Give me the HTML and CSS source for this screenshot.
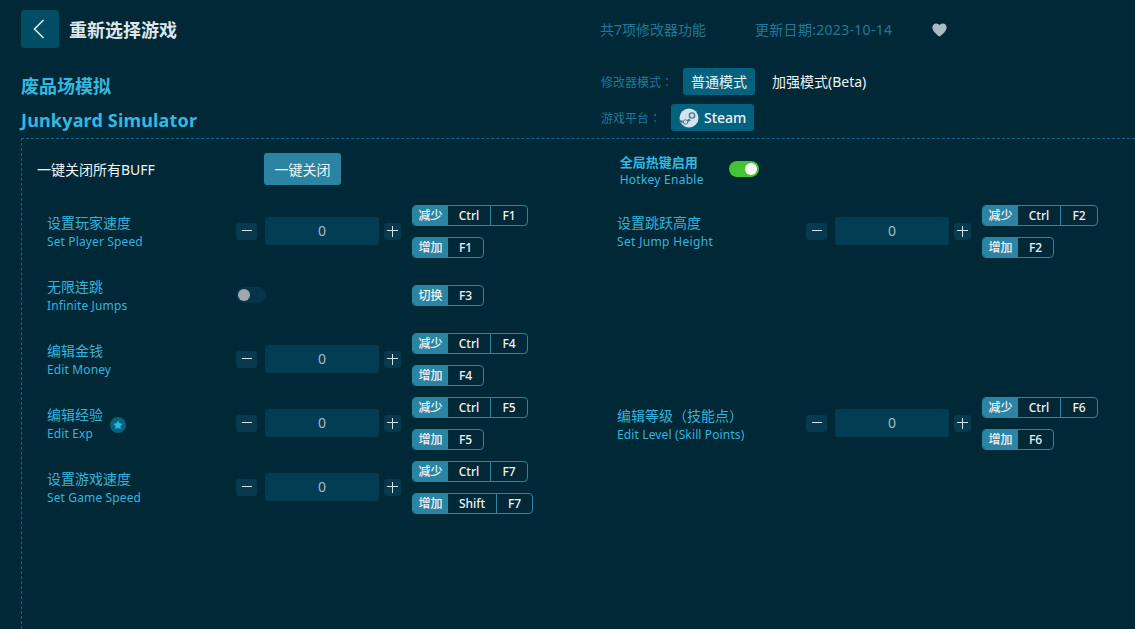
FILE: index.html
```html
<!DOCTYPE html>
<html lang="zh-CN">
<head>
<meta charset="utf-8">
<title>Junkyard Simulator</title>
<link rel="stylesheet" href="styles.css">
</head>
<body>
<header class="topbar">
  <div class="topbar-left">
    <button class="back"><svg width="12" height="20" viewBox="0 0 12 20"><path d="M10.500 1 1.500 10l9 9" fill="none" stroke="#e6eef2" stroke-width="1.500"/></svg></button>
    <h1 class="page-title">重新选择游戏</h1>
  </div>
  <div class="topbar-right">
    <span class="meta meta-count">共7项修改器功能</span>
    <span class="meta meta-date">更新日期:2023-10-14</span>
    <svg class="heart" width="15" height="14" viewBox="0 0 15 14"><path d="M7.500 13.600C3 10 .4 7.600.4 4.400.4 2 2.200.4 4.200.4c1.400 0 2.600.7 3.300 1.900C8.200 1.100 9.400.4 10.800.4c2 0 3.800 1.600 3.800 4 0 3.200-2.600 5.600-7.100 9.200z" fill="#a9bcc6"/></svg>
  </div>
</header>
<section class="info">
  <div class="game">
    <div class="game-name">废品场模拟</div>
    <div class="game-name game-en">Junkyard Simulator</div>
  </div>
  <div class="modes">
    <div class="mode-row">
      <span class="mode-label">修改器模式<span lang="zh-TW">：</span></span>
      <span class="mode-btn active">普通模式</span>
      <span class="mode-btn">加强模式(Beta)</span>
    </div>
    <div class="mode-row">
      <span class="mode-label">游戏平台<span lang="zh-TW">：</span></span>
      <span class="platform">
        <svg width="20" height="20" viewBox="0 0 20 20"><circle cx="10" cy="10" r="9.500" fill="#d5e2ea"/><circle cx="13" cy="7.500" r="3.300" fill="#3f7f9c"/><circle cx="13" cy="7.500" r="1.900" fill="#d5e2ea"/><path d="M.6 11.500l5 2.200 4.600-3.300 1.500 2-5.200 3.400-6-1.800z" fill="#3f7f9c"/><circle cx="6.500" cy="14" r="2.200" fill="#d5e2ea" stroke="#3f7f9c"/></svg>
        Steam
      </span>
    </div>
  </div>
</section>
<main class="panel">
  <div class="panel-top">
    <div class="panel-cell kill">
      <span class="kill-label">一键关闭所有BUFF</span>
      <button class="kill-btn">一键关闭</button>
    </div>
    <div class="panel-cell hotkey">
      <div class="hotkey-text">
        <div class="hotkey-cn">全局热键启用</div>
        <div class="hotkey-en">Hotkey Enable</div>
      </div>
      <span class="switch on"><i></i></span>
    </div>
  </div>
  <div class="grid">
    <div class="row">
      <div class="label"><div class="cn">设置玩家速度</div><div class="en">Set Player Speed</div></div>
      <div class="stepper"><span class="step minus"></span><span class="value">0</span><span class="step plus"></span></div>
      <div class="keys">
        <div class="key"><b>减少</b><span class="k-ctrl">Ctrl</span><span class="k-f">F1</span></div>
        <div class="key"><b>增加</b><span class="k-f">F1</span></div>
      </div>
    </div>
    <div class="row">
      <div class="label"><div class="cn">设置跳跃高度</div><div class="en en-wide">Set Jump Height</div></div>
      <div class="stepper"><span class="step minus"></span><span class="value">0</span><span class="step plus"></span></div>
      <div class="keys">
        <div class="key"><b>减少</b><span class="k-ctrl">Ctrl</span><span class="k-f">F2</span></div>
        <div class="key"><b>增加</b><span class="k-f">F2</span></div>
      </div>
    </div>
    <div class="row">
      <div class="label"><div class="cn">无限连跳</div><div class="en">Infinite Jumps</div></div>
      <div class="toggle-wrap"><span class="switch off"><i></i></span></div>
      <div class="keys">
        <div class="key"><b>切换</b><span class="k-f">F3</span></div>
      </div>
    </div>
    <div class="row empty"></div>
    <div class="row">
      <div class="label"><div class="cn">编辑金钱</div><div class="en">Edit Money</div></div>
      <div class="stepper"><span class="step minus"></span><span class="value">0</span><span class="step plus"></span></div>
      <div class="keys">
        <div class="key"><b>减少</b><span class="k-ctrl">Ctrl</span><span class="k-f">F4</span></div>
        <div class="key"><b>增加</b><span class="k-f">F4</span></div>
      </div>
    </div>
    <div class="row empty"></div>
    <div class="row">
      <div class="label label-star">
        <div><div class="cn">编辑经验</div><div class="en">Edit Exp</div></div>
        <span class="star"><svg width="10" height="10" viewBox="0 0 10 10"><path d="M5 .4l1.450 2.950 3.250.47-2.350 2.300.56 3.230L5 7.830 2.090 9.350l.56-3.230L.3 3.820l3.250-.47z" fill="#2fb8e6"/></svg></span>
      </div>
      <div class="stepper"><span class="step minus"></span><span class="value">0</span><span class="step plus"></span></div>
      <div class="keys">
        <div class="key"><b>减少</b><span class="k-ctrl">Ctrl</span><span class="k-f">F5</span></div>
        <div class="key"><b>增加</b><span class="k-f">F5</span></div>
      </div>
    </div>
    <div class="row">
      <div class="label"><div class="cn">编辑等级<span lang="zh-TW">（</span>技能点<span lang="zh-TW">）</span></div><div class="en">Edit Level (Skill Points)</div></div>
      <div class="stepper"><span class="step minus"></span><span class="value">0</span><span class="step plus"></span></div>
      <div class="keys">
        <div class="key"><b>减少</b><span class="k-ctrl">Ctrl</span><span class="k-f">F6</span></div>
        <div class="key"><b>增加</b><span class="k-f">F6</span></div>
      </div>
    </div>
    <div class="row">
      <div class="label"><div class="cn">设置游戏速度</div><div class="en">Set Game Speed</div></div>
      <div class="stepper"><span class="step minus"></span><span class="value">0</span><span class="step plus"></span></div>
      <div class="keys">
        <div class="key"><b>减少</b><span class="k-ctrl">Ctrl</span><span class="k-f">F7</span></div>
        <div class="key"><b>增加</b><span class="k-shift">Shift</span><span class="k-f">F7</span></div>
      </div>
    </div>
    <div class="row empty"></div>
  </div>
</main>
</body>
</html>
```
FILE: styles.css
```css
* { box-sizing: border-box; }
html, body { margin: 0; height: 100%; }
body {
  height: 629px;
  overflow: hidden;
  background: #002837;
  color: #fff;
  font-family: "Noto Sans", "Noto Sans CJK SC", sans-serif;
  font-size: 13px;
}
[lang="zh-TW"] { font-family: "Noto Sans CJK TC", sans-serif; }
.topbar { display: flex; height: 38px; margin-top: 10px; padding-left: 21px; }
.topbar-left { display: flex; align-items: center; width: 579px; }
.back {
  width: 38px; height: 38px; padding: 0 3px 0 0; border: 0; border-radius: 3px;
  background: #024d66; display: flex; align-items: center; justify-content: center;
}
.page-title { margin: 2px 0 0 10px; font-size: 18px; font-weight: 700; color: #dfe6ea; line-height: 38px; }
.topbar-right { display: flex; align-items: center; height: 40px; }
.meta { font-size: 14px; color: #1f7a9a; line-height: 18px; }
.meta-count { width: 155px; white-space: nowrap; }
.meta-date { width: 177px; letter-spacing: .3px; white-space: nowrap; }
.heart { display: block; }
.info { display: flex; height: 70px; margin-top: 20px; padding-left: 21px; }
.game { width: 580px; padding-top: 2px; }
.game-name { font-size: 18px; font-weight: 700; color: #35b8e0; line-height: 33px; height: 33px; white-space: nowrap; }
.game-en { letter-spacing: .17px; padding-top: 1px; }
.modes { display: flex; flex-direction: column; gap: 9px; }
.mode-row { display: flex; align-items: center; height: 27px; }
.mode-label { font-size: 12px; color: #1f7a9a; width: 82px; white-space: nowrap; }
.mode-row + .mode-row .mode-label { width: 70px; }
.mode-btn { font-size: 14px; line-height: 27px; height: 27px; padding: 0 8px; border-radius: 3px; color: #eef4f6; white-space: nowrap; }
.mode-btn.active { background: #05627f; margin-right: 9px; }
.platform {
  display: flex; align-items: center; gap: 5px; height: 27px; width: 83px; padding-left: 8px;
  border-radius: 3px; background: #05627f; font-size: 14px; font-weight: 500; color: #eef4f6;
}
.panel { margin-left: 21px; height: 491px; border-top: 1px dashed #0b6a88; border-left: 1px dashed #0b6a88; }
.panel-top { display: flex; height: 60px; }
.panel-cell { display: flex; width: 570px; }
.kill { padding-left: 15px; align-items: flex-start; }
.kill-label { width: 227px; font-size: 14px; line-height: 20px; margin-top: 21px; color: #f0f5f7; white-space: nowrap; }
.kill-btn {
  width: 77px; height: 32px; margin-top: 14px; padding: 0; border: 0; border-radius: 3px;
  background: #2a84a2; color: #eef4f6; font-family: inherit; font-size: 14px;
}
.hotkey { padding-left: 42px; margin-left: -1px; align-items: flex-start; }
.hotkey-text { width: 109px; margin-top: 14px; white-space: nowrap; }
.hotkey-cn { font-size: 13px; font-weight: 700; line-height: 18px; color: #35b8e0; }
.hotkey-en { font-size: 12px; line-height: 18px; letter-spacing: .25px; color: #35b8e0; }
.switch { display: block; width: 30px; height: 16px; border-radius: 8px; position: relative; }
.switch i { position: absolute; top: 2px; width: 12px; height: 12px; border-radius: 50%; }
.switch.on { background: #42c436; margin-top: 22px; }
.switch.on i { right: 2px; background: #fff; }
.switch.off { background: #06344a; }
.switch.off i { left: 2px; background: #a2a9ad; }
.grid { display: grid; grid-template-columns: 570px 570px; grid-auto-rows: 64px; }
.row { display: flex; align-items: center; padding-left: 25px; }
.label { width: 189px; padding-top: 3px; white-space: nowrap; }
.label-star { display: flex; align-items: center; }
.star {
  display: flex; align-items: center; justify-content: center;
  width: 16px; height: 16px; margin-left: 7px; border-radius: 50%; background: #05627f;
}
.cn { font-size: 14px; line-height: 18px; color: #35b4dc; }
.en { font-size: 12px; line-height: 18px; margin-top: 1px; letter-spacing: .13px; color: #35b4dc; }
.en-wide { letter-spacing: .33px; }
.stepper { display: flex; align-items: center; width: 176px; }
.step {
  width: 21px; height: 17px; border-radius: 3px; background-color: #083a4f; background-repeat: no-repeat;
}
.step.minus {
  background-image: linear-gradient(#d8e3e8, #d8e3e8);
  background-size: 10px 1.300px;
  background-position: center;
}
.step.plus {
  width: 17px; margin-left: 5px;
  background-image: linear-gradient(#d8e3e8, #d8e3e8), linear-gradient(#d8e3e8, #d8e3e8);
  background-size: 11px 1.300px, 1.300px 11px;
  background-position: center;
}
.value {
  width: 114px; height: 28px; margin-left: 8px; border-radius: 3px; background: #033d54;
  color: #a9bcc6; font-size: 14px; line-height: 28px; text-align: center;
}
.toggle-wrap { width: 176px; }
.keys { display: flex; flex-direction: column; gap: 11px; }
.key {
  display: flex; width: fit-content; height: 21px; border: 1px solid #2a84a2; border-radius: 4px;
  overflow: hidden; font-size: 12px; line-height: 19px; color: #eef4f6; font-weight: 500;
}
.key b { width: 35px; background: #2a84a2; text-align: center; font-weight: 500; }
.key span { text-align: center; }
.k-ctrl { width: 43px; border-right: 1px solid #2a84a2; }
.k-shift { width: 49px; border-right: 1px solid #2a84a2; }
.k-f { width: 35px; }
.k-ctrl + .k-f { width: 36px; }
```
